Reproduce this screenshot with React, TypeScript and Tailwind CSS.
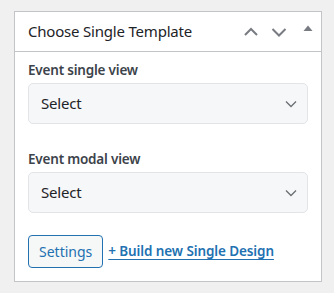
const FIELDS = ["Event single view", "Event modal view"]

function SelectBox() {
  return (
    <div className="flex items-center justify-between h-[41px] pl-3 pr-[10px] bg-[#f6f7f8] border border-[#e2e4e7] rounded-[5px]">
      <span className="text-[15px] text-[#1d2327] tracking-[-0.2px]">Select</span>
      <svg width="12" height="8" viewBox="0 0 12 8" fill="none" stroke="#6b6f73" strokeWidth="1.3">
        <path d="M1 1.5 L6 6.5 L11 1.5" />
      </svg>
    </div>
  )
}

export default function App() {
  return (
    <div className="w-[334px] h-[293px] bg-[#f0f0f1] pt-[11px] pl-[14px] font-['Noto_Sans',sans-serif]">
      <div className="w-[308px] h-[271px] bg-white border border-[#c3c4c7]">
        <div className="flex items-center justify-between h-[40px] pl-[13px] pr-[8px] border-b border-[#c3c4c7]">
          <h2 className="text-[15px] text-[#1d2327] tracking-[-0.2px]">Choose Single Template</h2>
          <div className="flex items-center text-[#787c82]">
            <svg width="16" height="16" viewBox="0 0 16 16" fill="none" stroke="currentColor" strokeWidth="2">
              <path d="M2 11 L8 5 L14 11" />
            </svg>
            <svg width="16" height="16" viewBox="0 0 16 16" fill="none" stroke="currentColor" strokeWidth="2" className="ml-[12px]">
              <path d="M1.5 5 L8 11.5 L14.5 5" />
            </svg>
            <svg width="10" height="16" viewBox="0 0 10 16" fill="currentColor" className="ml-[16px] mb-[3px]">
              <path d="M0.5 9 L5 3.5 L9.5 9 Z" />
            </svg>
          </div>
        </div>
        <div className="px-[13px] pt-[8px]">
          {FIELDS.map((f, i) => (
            <div key={f} className={i === 0 ? "mb-[25px]" : "mb-[22px]"}>
              <p className="text-[13.5px] font-semibold text-[#3c434a] mb-[3px] leading-[20px] tracking-[-0.2px]">{f}</p>
              <SelectBox />
            </div>
          ))}
          <div className="flex items-center gap-[5px]">
            <button className="h-[33px] px-[10px] text-[14px] text-[#2271b1] bg-[#f6f7f7] border border-[#2271b1] rounded-[4px]">
              Settings
            </button>
            <a href="#" className="text-[13.5px] font-semibold text-[#2271b1] underline underline-offset-[3px] tracking-[-0.1px]">
              + Build new Single Design
            </a>
          </div>
        </div>
      </div>
    </div>
  )
}
